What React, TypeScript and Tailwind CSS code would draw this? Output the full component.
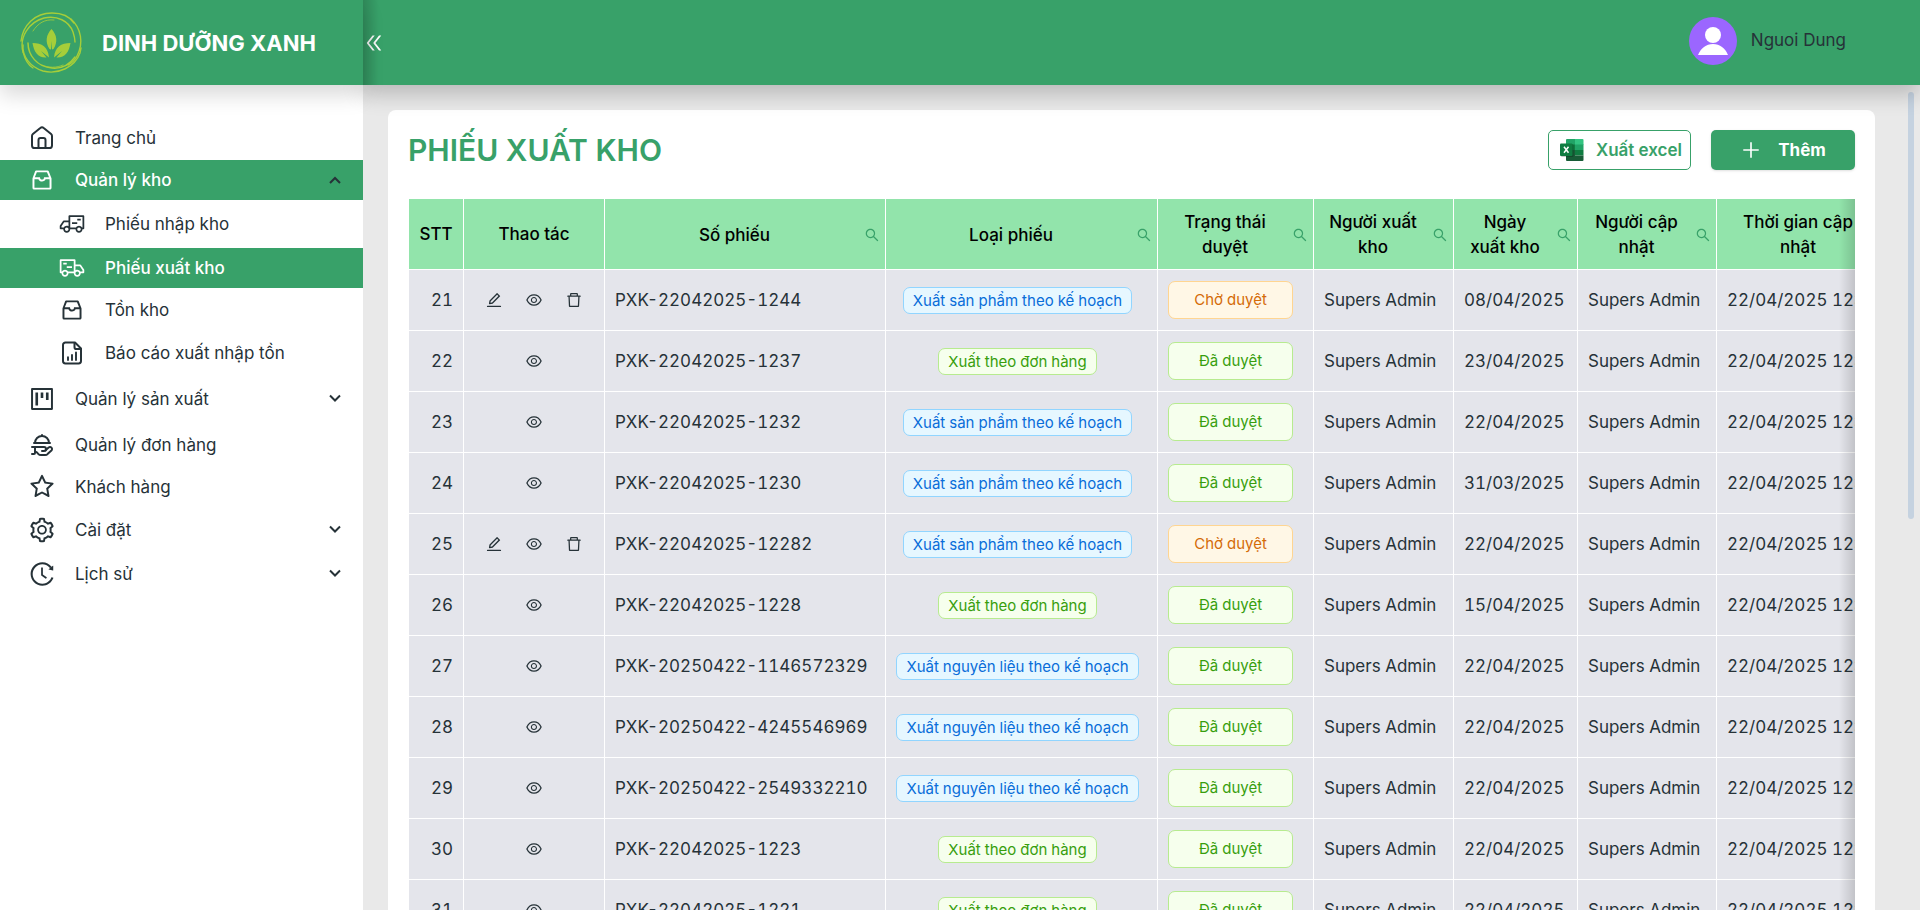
import {
  AiOutlineDelete,
  AiOutlineDoubleLeft,
  AiOutlineEdit,
  AiOutlineEye,
  AiOutlineHistory,
  AiOutlineInbox,
  AiOutlinePlus,
  AiOutlineProject,
  AiOutlineSearch,
  AiOutlineSetting,
  AiOutlineStar,
  AiOutlineTruck,
} from 'react-icons/ai';
import { LuHandPlatter } from 'react-icons/lu';
import type { ReactNode } from 'react';

type IconProps = { className?: string };

function HomeIcon({ className }: IconProps) {
  return (
    <svg viewBox="0 0 24 24" className={className} fill="none" stroke="currentColor" strokeWidth="2" strokeLinejoin="round" aria-hidden="true">
      <path d="M4.6 22h14.8a2.6 2.6 0 0 0 2.6-2.6V10a2.6 2.6 0 0 0-.9-2L13.700 2a2.600 2.600 0 0 0-3.400 0L2.900 8A2.600 2.600 0 0 0 2 10v9.400A2.600 2.600 0 0 0 4.600 22Z" />
      <path d="M8.500 22v-8a2 2 0 0 1 2-2h3a2 2 0 0 1 2 2v8" />
    </svg>
  );
}

function ReportIcon({ className }: IconProps) {
  return (
    <svg viewBox="0 0 24 24" className={className} fill="none" stroke="currentColor" strokeWidth="2" strokeLinejoin="round" aria-hidden="true">
      <path d="M15 1.500H5.400A2.400 2.400 0 0 0 3 3.900v16.200a2.400 2.400 0 0 0 2.400 2.400h13.200a2.400 2.400 0 0 0 2.400-2.400V7.500z" />
      <path d="M14.500 1.500v4.400a2.200 2.200 0 0 0 2.200 2.200H21" />
      <path d="M8 19v-2.800M12 19v-5M16 19v-7.500" strokeWidth="1.900" strokeLinecap="round" />
    </svg>
  );
}

function Caret({ open }: { open?: boolean }) {
  return (
    <svg viewBox="0 0 12 12" className="size-3" fill="none" stroke="currentColor" strokeWidth="2" aria-hidden="true">
      <path d={open ? 'M1 9 6 4l5 5' : 'M1 2.500l5 5 5-5'} />
    </svg>
  );
}

function Logo() {
  return (
    <svg viewBox="0 0 64 64" className="size-16 shrink-0 text-[#a6ce39]" fill="none" stroke="currentColor" strokeLinecap="round" role="img" aria-label="Logo">
      <path d="M1 30C3 14 15 2 32 2C42 2 50 6 54 12" strokeWidth="1.400" />
      <path d="M3 41C-1 26 9 11 24 7C37 4 49 10 53 21C54 24 55 27 55 31" strokeWidth="1.400" />
      <path d="M51 8C61 17 64 32 57 45C55 49 52 52 48 54" strokeWidth="1.400" />
      <path d="M3 34C2 45 10 56 23 60C38 64 55 56 60 42L61 37" strokeWidth="1.400" />
      <path d="M8 32C8 44 17 56 32 57C42 58 50 53 55 46" strokeWidth="1.500" />
      <path d="M3 41C5 49 8 54 13 57" strokeWidth="1.200" />
      <path d="M13 20C18 12 25 8 34 9" strokeWidth=".8" />
      <path d="M22 54C28 57 37 57 43 54" strokeWidth=".8" />
      <g fill="currentColor" stroke="none">
        <path d="M31.500 18C37 24 38 31 33.500 38L32 38.500V30L31 38.500L29.500 38C25 31 26 24 31.500 18Z" />
        <path d="M12.500 32C22 32 28 36 29 46.500L21 40L26.500 46.500C18 47 14 41 12.500 32Z" />
        <path d="M50.500 32C41 32 35 36 34 46.500L42 40L36.500 46.500C45 47 49 41 50.500 32Z" />
      </g>
    </svg>
  );
}

function ExcelIcon() {
  return (
    <svg viewBox="0 0 24 22" className="h-[22px] w-6 shrink-0" aria-hidden="true">
      <path d="M7 0h8v6H6V1a1 1 0 0 1 1-1Z" fill="#21a366" />
      <path d="M15 0h7.500a1 1 0 0 1 1 1v5H15z" fill="#33c481" />
      <path d="M6 5.500h9V11H6z" fill="#107c41" />
      <path d="M15 5.500h8.500V11H15z" fill="#21a366" />
      <path d="M15 11h8.500v5.500H15z" fill="#107c41" />
      <path d="M6 11h9v5.500h8.500V21a1 1 0 0 1-1 1H7a1 1 0 0 1-1-1z" fill="#185c37" />
      <rect x="1" y="5" width="12.500" height="13" rx="1" fill="#000" opacity=".2" />
      <rect y="4.500" width="12.500" height="12.500" rx="1" fill="#107c41" />
      <path d="m4 7.800 4.500 6M8.500 7.800l-4.500 6" stroke="#fff" strokeWidth="1.500" />
    </svg>
  );
}

type MenuItem = {
  label: string;
  icon: ReactNode;
  child?: boolean;
  active?: boolean;
  caret?: 'open' | 'closed';
  height: string;
};

const menu: MenuItem[] = [
  { label: 'Trang chủ', icon: <HomeIcon className="size-6" />, height: 'h-[45px]' },
  { label: 'Quản lý kho', icon: <AiOutlineInbox className="size-[26px]" />, active: true, caret: 'open', height: 'h-10' },
  { label: 'Phiếu nhập kho', icon: <AiOutlineTruck className="size-7 -scale-x-100" />, child: true, height: 'h-12' },
  { label: 'Phiếu xuất kho', icon: <AiOutlineTruck className="size-7" />, child: true, active: true, height: 'h-10' },
  { label: 'Tồn kho', icon: <AiOutlineInbox className="size-[26px]" />, child: true, height: 'h-[43px]' },
  { label: 'Báo cáo xuất nhập tồn', icon: <ReportIcon className="size-6" />, child: true, height: 'h-[43px]' },
  { label: 'Quản lý sản xuất', icon: <AiOutlineProject className="size-7" />, caret: 'closed', height: 'h-[50px]' },
  { label: 'Quản lý đơn hàng', icon: <LuHandPlatter className="size-6" />, height: 'h-[42px]' },
  { label: 'Khách hàng', icon: <AiOutlineStar className="size-7" />, height: 'h-[42px]' },
  { label: 'Cài đặt', icon: <AiOutlineSetting className="size-7" />, caret: 'closed', height: 'h-[43px]' },
  { label: 'Lịch sử', icon: <AiOutlineHistory className="size-7" />, caret: 'closed', height: 'h-[46px]' },
];

function Sidebar() {
  return (
    <aside className="flex w-[363px] shrink-0 flex-col bg-white">
      <div className="z-10 flex h-[85px] shrink-0 items-center gap-[18px] bg-[#38a169] pl-5 shadow-[0_10px_20px_rgba(0,0,0,0.15)]">
        <Logo />
        <span className="pt-0.5 text-[22px] font-bold whitespace-nowrap text-white">DINH DƯỠNG XANH</span>
      </div>
      <nav className="pt-[30px]">
        <ul>
          {menu.map((item) => (
            <li key={item.label}>
              <a
                href="#"
                className={`flex items-center pr-[22px] ${item.height} ${item.child ? 'pl-[58px]' : 'pl-7'} ${
                  item.active ? 'bg-[#38a169] font-medium text-white' : 'text-[#263238]'
                }`}
              >
                <span className="mr-[19px] flex w-7 shrink-0 justify-center">{item.icon}</span>
                <span className="grow pt-0.5">{item.label}</span>
                {item.caret && (
                  <span className="text-[#263238]">
                    <Caret open={item.caret === 'open'} />
                  </span>
                )}
              </a>
            </li>
          ))}
        </ul>
      </nav>
    </aside>
  );
}

type Kind = 'plan' | 'order' | 'material';

const kinds: Record<Kind, { label: string; style: string }> = {
  plan: { label: 'Xuất sản phẩm theo kế hoạch', style: 'border-[#91d5ff] bg-[#e6f7ff] text-[#096dd9]' },
  order: { label: 'Xuất theo đơn hàng', style: 'border-[#b7eb8f] bg-[#f6ffed] text-[#389e0d]' },
  material: { label: 'Xuất nguyên liệu theo kế hoạch', style: 'border-[#91d5ff] bg-[#e6f7ff] text-[#096dd9]' },
};

type Row = { no: number; code: string; kind: Kind; pending?: boolean; date: string };

const rows: Row[] = [
  { no: 21, code: 'PXK-22042025-1244', kind: 'plan', pending: true, date: '08/04/2025' },
  { no: 22, code: 'PXK-22042025-1237', kind: 'order', date: '23/04/2025' },
  { no: 23, code: 'PXK-22042025-1232', kind: 'plan', date: '22/04/2025' },
  { no: 24, code: 'PXK-22042025-1230', kind: 'plan', date: '31/03/2025' },
  { no: 25, code: 'PXK-22042025-12282', kind: 'plan', pending: true, date: '22/04/2025' },
  { no: 26, code: 'PXK-22042025-1228', kind: 'order', date: '15/04/2025' },
  { no: 27, code: 'PXK-20250422-1146572329', kind: 'material', date: '22/04/2025' },
  { no: 28, code: 'PXK-20250422-4245546969', kind: 'material', date: '22/04/2025' },
  { no: 29, code: 'PXK-20250422-2549332210', kind: 'material', date: '22/04/2025' },
  { no: 30, code: 'PXK-22042025-1223', kind: 'order', date: '22/04/2025' },
  { no: 31, code: 'PXK-22042025-1221', kind: 'order', date: '22/04/2025' },
];

const columns = [
  { label: 'STT', width: 'w-[55px]' },
  { label: 'Thao tác', width: 'w-[141px]' },
  { label: 'Số phiếu', width: 'w-[281px]', search: true },
  { label: 'Loại phiếu', width: 'w-[272px]', search: true },
  { label: 'Trạng thái duyệt', width: 'w-[156px]', search: true },
  { label: 'Người xuất kho', width: 'w-[140px]', search: true },
  { label: 'Ngày xuất kho', width: 'w-[124px]', search: true },
  { label: 'Người cập nhật', width: 'w-[139px]', search: true },
  { label: 'Thời gian cập nhật', width: 'w-[184px]', search: true },
];

const cell = 'border-r border-b border-white px-[10px]';
const textCell = `${cell} pt-0.5`;

function ReceiptTable() {
  return (
    <div className="relative overflow-hidden pl-px">
      <table className="w-[1492px] table-fixed border-separate border-spacing-0 tabular-nums">
        <colgroup>
          {columns.map((c) => (
            <col key={c.label} className={c.width} />
          ))}
        </colgroup>
        <thead>
          <tr className="h-[71px] bg-[#92e4ab] text-black">
            {columns.map((c) => (
              <th key={c.label} scope="col" className="border-r border-b border-white px-0 pt-0.5 pb-0 font-medium">
                {c.search ? (
                  <div className="flex items-center pr-[5px]">
                    <span className="grow px-3 text-center leading-[25px]">{c.label}</span>
                    <button type="button" aria-label={`Tìm theo ${c.label}`} className="shrink-0 text-[#38a169]">
                      <AiOutlineSearch className="size-4" />
                    </button>
                  </div>
                ) : (
                  c.label
                )}
              </th>
            ))}
          </tr>
        </thead>
        <tbody>
          {rows.map((r) => (
            <tr key={r.no} className="h-[61px] bg-[#e4e5eb] whitespace-nowrap text-[#263238]">
              <td className={`${textCell} text-right`}>{r.no}</td>
              <td className={cell}>
                <div className="flex items-center justify-center gap-[22px]">
                  {r.pending && (
                    <button type="button" aria-label="Sửa">
                      <AiOutlineEdit className="size-[18px]" />
                    </button>
                  )}
                  <button type="button" aria-label="Xem">
                    <AiOutlineEye className="size-[18px]" />
                  </button>
                  {r.pending && (
                    <button type="button" aria-label="Xóa">
                      <AiOutlineDelete className="size-[18px]" />
                    </button>
                  )}
                </div>
              </td>
              <td className={textCell}>{r.code}</td>
              <td className={`${cell} text-center`}>
                <span className={`mr-2 inline-block rounded-[7px] border px-[9px] text-[15px] leading-[25px] ${kinds[r.kind].style}`}>{kinds[r.kind].label}</span>
              </td>
              <td className={cell}>
                <span
                  className={`block w-[125px] rounded-[7px] border text-center text-[15px] leading-9 ${
                    r.pending ? 'border-[#ffd591] bg-[#fff7e6] text-[#d46b08]' : 'border-[#b7eb8f] bg-[#f6ffed] text-[#389e0d]'
                  }`}
                >
                  {r.pending ? 'Chờ duyệt' : 'Đã duyệt'}
                </span>
              </td>
              <td className={textCell}>Supers Admin</td>
              <td className={textCell}>{r.date}</td>
              <td className={textCell}>Supers Admin</td>
              <td className={textCell}>22/04/2025 12:00</td>
            </tr>
          ))}
        </tbody>
      </table>
      <div className="pointer-events-none absolute inset-y-0 right-0 w-4 bg-linear-to-l from-black/15 to-transparent" />
    </div>
  );
}

export default function App() {
  return (
    <div className="flex h-screen overflow-hidden bg-[#e9e9e9] font-['Inter',sans-serif] text-[17px]">
      <Sidebar />
      <div className="flex min-w-0 grow flex-col">
        <header className="relative flex h-[85px] shrink-0 items-center justify-between bg-[#38a169] pr-[74px] shadow-[0_10px_20px_rgba(0,0,0,0.2)]">
          <div className="absolute inset-y-0 left-0 w-4 bg-linear-to-r from-black/15 to-transparent" />
          <button type="button" aria-label="Thu gọn menu" className="text-white">
            <AiOutlineDoubleLeft className="size-[22px]" />
          </button>
          <div className="mb-[3px] flex items-center gap-[14px]">
            <svg viewBox="0 0 48 48" className="size-12" role="img" aria-label="Ảnh đại diện">
              <circle cx="24" cy="24" r="24" fill="#9b66ff" />
              <circle cx="24" cy="18" r="8" fill="#fff" />
              <path d="M9 38c3-7 8-11 15-11s12 4 15 11z" fill="#fff" />
            </svg>
            <span className="text-[#263238]">Nguoi Dung</span>
          </div>
        </header>
        <div className="flex min-h-0 grow">
          <main className="min-w-0 grow overflow-hidden pt-[25px] pr-[33px] pl-[25px]">
            <section className="rounded-lg bg-white px-5 pt-5 pb-5">
              <div className="mb-[29px] flex h-10 items-center justify-between">
                <h1 className="text-[30px] font-semibold text-[#38a169]">PHIẾU XUẤT KHO</h1>
                <div className="flex gap-5">
                  <button type="button" className="flex h-10 w-[143px] items-center justify-between rounded-[5px] border border-[#38a169] pr-2 pl-[11px] font-semibold text-[#38a169]">
                    <ExcelIcon />
                    <span className="pt-0.5">Xuất excel</span>
                  </button>
                  <button type="button" className="flex h-10 w-36 items-center justify-center gap-4 rounded-[5px] bg-[#38a169] font-bold text-white shadow-sm">
                    <AiOutlinePlus className="size-[22px]" />
                    <span className="pt-0.5">Thêm</span>
                  </button>
                </div>
              </div>
              <ReceiptTable />
            </section>
          </main>
          <div className="w-3 shrink-0 pt-[7px]">
            <div className="h-[427px] w-1.5 rounded-full bg-[#c5d2e0]" />
          </div>
        </div>
      </div>
    </div>
  );
}
